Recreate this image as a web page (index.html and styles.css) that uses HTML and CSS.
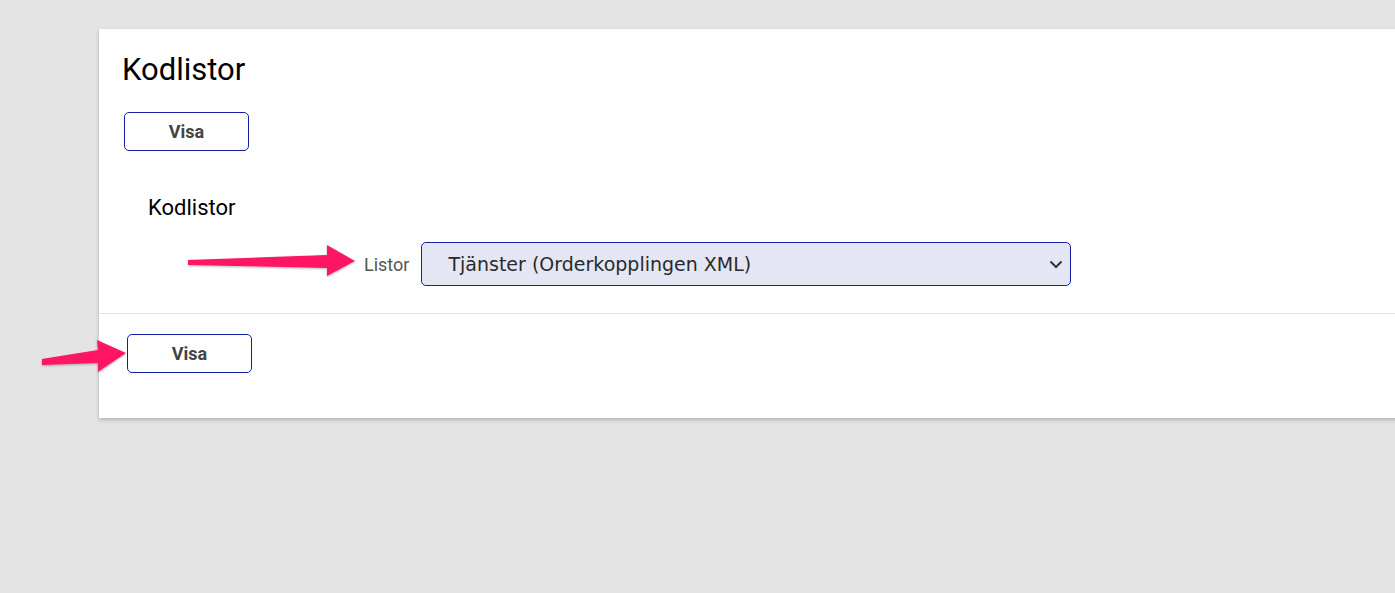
FILE: index.html
```html
<!DOCTYPE html>
<html lang="sv">
<head>
<meta charset="utf-8">
<title>Kodlistor</title>
<link rel="stylesheet" href="styles.css">
</head>
<body>
<div class="page">
  <div class="card">
    <div class="card-body">
      <h1 class="title">Kodlistor</h1>
      <button class="btn" type="button">Visa</button>
      <section class="group">
        <h2 class="group-title">Kodlistor</h2>
        <div class="field-row">
          <label class="field-label" for="listor">Listor</label>
          <div class="select-wrap">
            <select id="listor" class="select">
              <option>Tjänster (Orderkopplingen XML)</option>
            </select>
            <svg class="chevron" width="14" height="9" viewBox="0 0 14 9"><path d="M1.5 1.5 L7 7 L12.5 1.5" fill="none" stroke="#333" stroke-width="2"/></svg>
          </div>
        </div>
      </section>
    </div>
    <div class="card-footer">
      <button class="btn" type="button">Visa</button>
    </div>
  </div>
  <svg class="annotations" width="1395" height="593" viewBox="0 0 1395 593">
    <g fill="#ff1464" filter="url(#sh)">
      <polygon points="188,260 327,255 327,245 355,261 327,276 327,268 188,265"/>
      <polygon points="42,359 98,350 97,340 126,353 98,372 98,363 42,365"/>
    </g>
    <defs>
      <filter id="sh" x="-10%" y="-50%" width="120%" height="200%">
        <feDropShadow dx="0" dy="1" stdDeviation="1" flood-color="#000" flood-opacity="0.3"/>
      </filter>
    </defs>
  </svg>
</div>
</body>
</html>
```
FILE: styles.css
```css
html, body {
  margin: 0;
  padding: 0;
}
body {
  background: #e4e4e4;
  font-family: Roboto, "Liberation Sans", sans-serif;
  overflow: hidden;
}
.page {
  position: relative;
  width: 1395px;
  height: 593px;
  padding-top: 29px;
  box-sizing: border-box;
}
.card {
  margin-left: 99px;
  width: 1320px;
  height: 389px;
  background: #fff;
  box-shadow: 0 2px 4px rgba(0, 0, 0, 0.22);
  box-sizing: border-box;
  overflow: hidden;
}
.card-body {
  padding: 24px 0 27px 23px;
}
.title {
  margin: 0;
  font-size: 31px;
  font-weight: 400;
  line-height: 34px;
  color: #000;
}
.btn {
  display: block;
  width: 125px;
  height: 39px;
  margin: 25px 0 0 2px;
  padding: 0;
  background: #fff;
  border: 1px solid #1520a6;
  border-radius: 5px;
  font-family: Roboto, "Liberation Sans", sans-serif;
  font-size: 18px;
  font-weight: 700;
  color: #444;
}
.group {
  padding-left: 26px;
  margin-top: 44px;
}
.group-title {
  margin: 0;
  font-size: 22px;
  font-weight: 400;
  line-height: 26px;
  color: #000;
}
.field-row {
  display: flex;
  align-items: center;
  gap: 12px;
  margin-top: 21px;
  padding-left: 216px;
}
.field-label {
  font-size: 18px;
  color: #555;
}
.select-wrap {
  position: relative;
  width: 650px;
  height: 44px;
}
.select {
  width: 100%;
  height: 100%;
  appearance: none;
  -webkit-appearance: none;
  background: #e4e6f4;
  border: 1px solid #1520a6;
  border-radius: 5px;
  padding: 0 0 0 26px;
  font-family: "DejaVu Sans", Verdana, sans-serif;
  font-size: 19px;
  color: #2a2a2a;
}
.chevron {
  position: absolute;
  right: 8px;
  top: 18px;
}
.card-footer {
  border-top: 1px solid #e2e2e2;
  padding: 0 0 0 26px;
}
.card-footer .btn {
  margin-top: 20px;
}
.annotations {
  position: absolute;
  left: 0;
  top: 0;
  pointer-events: none;
}
```
